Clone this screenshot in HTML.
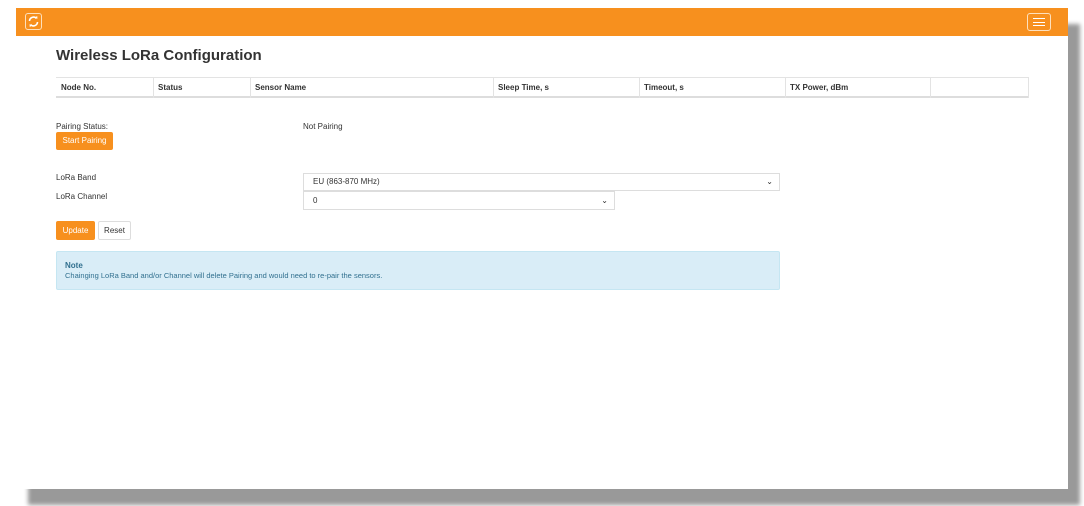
<!DOCTYPE html>
<html><head><style>
body{margin:0;width:1084px;height:506px;background:#fff;position:relative;overflow:hidden;font-family:"Liberation Sans",sans-serif;color:#333}
.a{position:absolute}
.t{font-size:8px}
</style></head><body>
<div class="a" style="left:28px;top:24px;width:1052px;height:481px;background:#999;filter:blur(2px)"></div>
<div class="a" style="left:16px;top:8px;width:1052px;height:481px;background:#fff"></div>
<div class="a" style="left:16px;top:8px;width:1052px;height:28px;background:#f7901e"></div>
<div class="a" style="left:25px;top:13px;width:17px;height:17px;border:1px solid #fde0bd;border-radius:3px;box-sizing:border-box">
<svg width="15" height="15" viewBox="0 0 15 15" style="position:absolute;left:0;top:0"><path d="M3.5 7a4 4 0 0 1 7-2.5M11.5 8a4 4 0 0 1-7 2.5" stroke="#fff" stroke-width="1.6" fill="none"/><path d="M9 3.5l2.5 1.2-.3-2.7zM6 11.5l-2.5-1.2.3 2.7z" fill="#fff"/></svg></div>
<div class="a" style="left:1027px;top:13px;width:24px;height:18px;border:1px solid #fde0bd;border-radius:3px;box-sizing:border-box">
<div class="a" style="left:5px;top:4px;width:12px;height:1.4px;background:#fff"></div>
<div class="a" style="left:5px;top:7.5px;width:12px;height:1.4px;background:#fff"></div>
<div class="a" style="left:5px;top:11px;width:12px;height:1.4px;background:#fff"></div></div>
<div class="a" style="left:56px;top:47px;font-size:15px;font-weight:bold;color:#333">Wireless LoRa Configuration</div>
<div class="a" style="left:56px;top:77px;width:972px;height:21px;border-top:1px solid #e3e3e3;border-bottom:2px solid #ddd;box-sizing:border-box"></div>
<div class="a" style="left:153px;top:77px;width:1px;height:21px;background:#e3e3e3"></div>
<div class="a" style="left:250px;top:77px;width:1px;height:21px;background:#e3e3e3"></div>
<div class="a" style="left:493px;top:77px;width:1px;height:21px;background:#e3e3e3"></div>
<div class="a" style="left:639px;top:77px;width:1px;height:21px;background:#e3e3e3"></div>
<div class="a" style="left:785px;top:77px;width:1px;height:21px;background:#e3e3e3"></div>
<div class="a" style="left:930px;top:77px;width:1px;height:21px;background:#e3e3e3"></div>
<div class="a" style="left:1028px;top:77px;width:1px;height:21px;background:#e3e3e3"></div>
<div class="a t" style="left:61px;top:83px;font-weight:bold">Node No.</div>
<div class="a t" style="left:158px;top:83px;font-weight:bold">Status</div>
<div class="a t" style="left:255px;top:83px;font-weight:bold">Sensor Name</div>
<div class="a t" style="left:498px;top:83px;font-weight:bold">Sleep Time, s</div>
<div class="a t" style="left:644px;top:83px;font-weight:bold">Timeout, s</div>
<div class="a t" style="left:790px;top:83px;font-weight:bold">TX Power, dBm</div>
<div class="a t" style="left:56px;top:122px">Pairing Status:</div>
<div class="a t" style="left:303px;top:122px">Not Pairing</div>
<div class="a t" style="left:56px;top:132px;width:57px;height:18px;background:#f7901e;border-radius:2px;color:#fff;line-height:18px;text-align:center">Start Pairing</div>
<div class="a t" style="left:56px;top:173px">LoRa Band</div>
<div class="a t" style="left:56px;top:192px">LoRa Channel</div>
<div class="a t" style="left:303px;top:173px;width:477px;height:18px;border:1px solid #ddd;box-sizing:border-box;line-height:16px;padding-left:9px">EU (863-870 MHz)<span class="a" style="right:6px;top:0">&#8964;</span></div>
<div class="a t" style="left:303px;top:191px;width:312px;height:19px;border:1px solid #ddd;box-sizing:border-box;line-height:17px;padding-left:9px">0<span class="a" style="right:6px;top:0">&#8964;</span></div>
<div class="a t" style="left:56px;top:221px;width:39px;height:19px;background:#f7901e;border-radius:2px;color:#fff;line-height:19px;text-align:center">Update</div>
<div class="a t" style="left:98px;top:221px;width:33px;height:19px;border:1px solid #ddd;box-sizing:border-box;border-radius:2px;line-height:17px;text-align:center">Reset</div>
<div class="a" style="left:56px;top:251px;width:724px;height:39px;background:#d9edf7;border:1px solid #c5e6f2;box-sizing:border-box;border-radius:2px"></div>
<div class="a t" style="left:65px;top:261px;font-weight:bold;color:#31708f">Note</div>
<div class="a" style="left:65px;top:271px;font-size:7.5px;color:#31708f">Chainging LoRa Band and/or Channel will delete Pairing and would need to re-pair the sensors.</div>
</body></html>
